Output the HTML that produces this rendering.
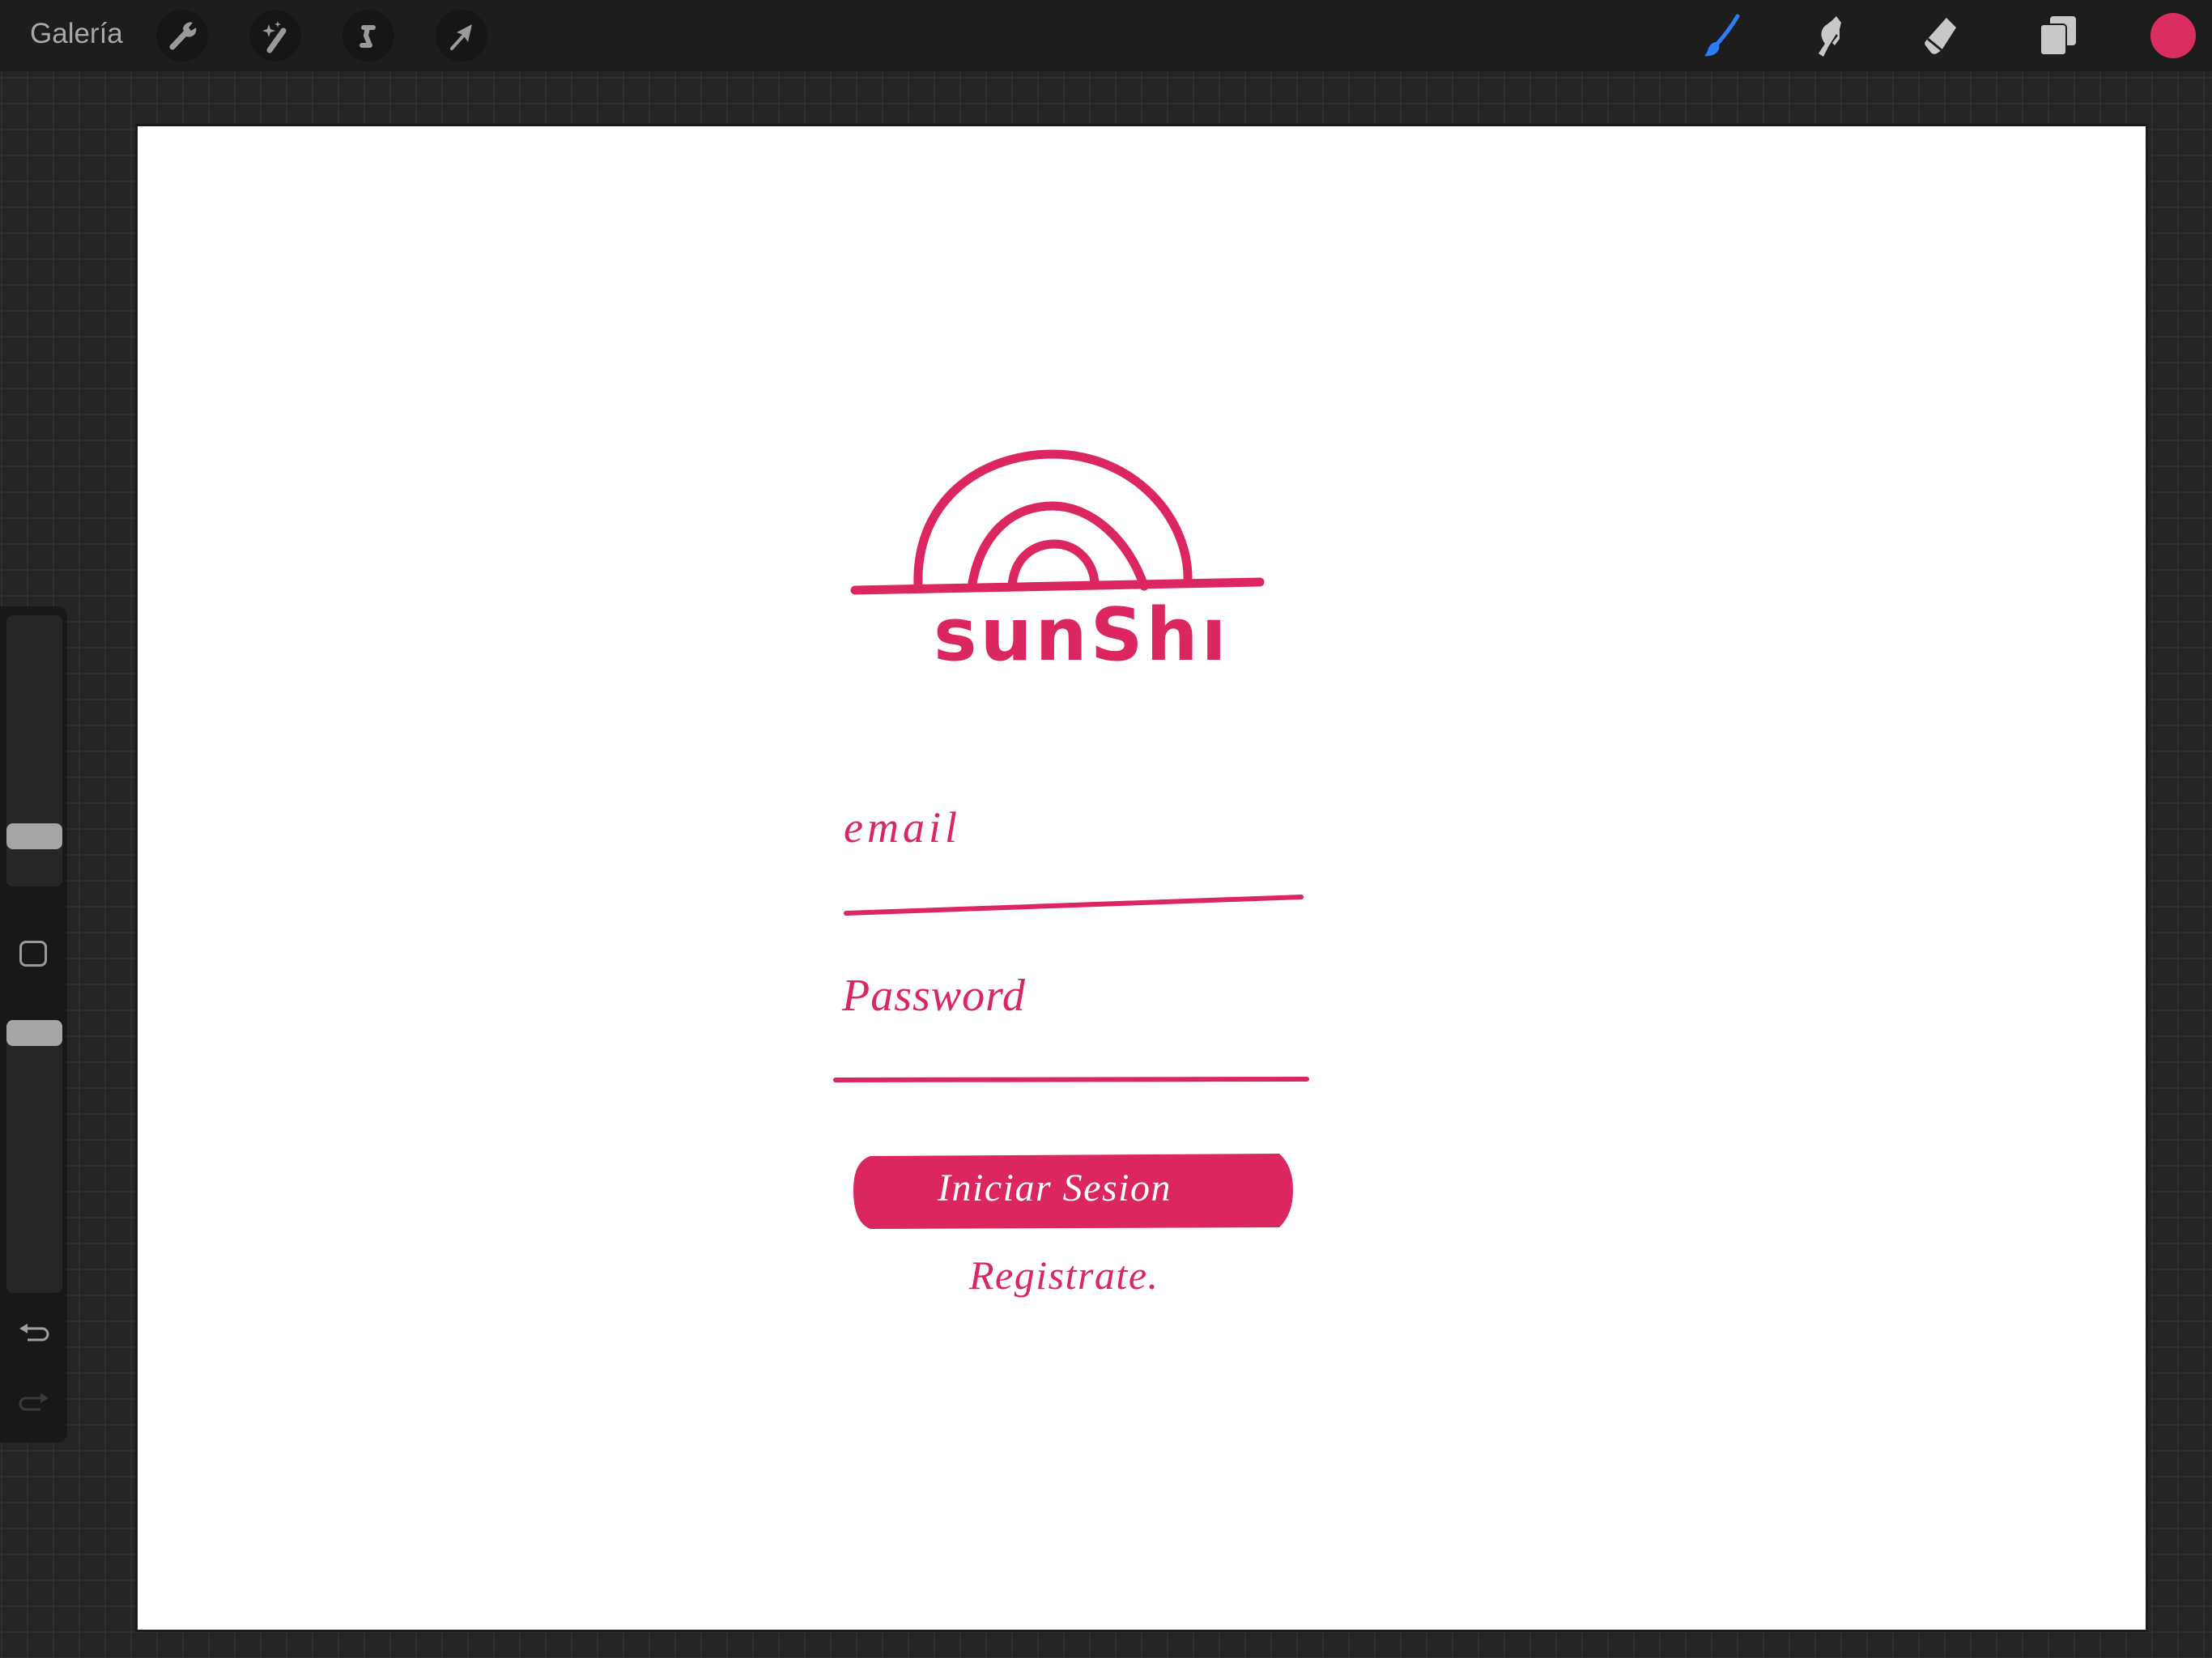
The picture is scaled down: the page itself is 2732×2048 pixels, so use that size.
<!DOCTYPE html>
<html><head><meta charset="utf-8"><style>
html,body{margin:0;padding:0;width:2732px;height:2048px;overflow:hidden;background:#252525;font-family:"Liberation Sans",sans-serif}
.grid{position:absolute;left:0;top:88px;width:2732px;height:1960px;
background-color:#252525;
background-image:linear-gradient(to right,#2f2f2f 2px,transparent 2px),linear-gradient(to bottom,#2f2f2f 2px,transparent 2px);
background-size:32px 32px;background-position:1px 7px}
.top{position:absolute;left:0;top:0;width:2732px;height:88px;background:#1d1d1d}
.gal{position:absolute;left:37px;top:22px;font-size:35px;color:#a8a8a8}
.circ{position:absolute;top:12px;width:64px;height:64px;border-radius:50%;background:#161616}
.circ svg{position:absolute;left:0;top:0}
.canvas{position:absolute;left:170px;top:156px;width:2480px;height:1857px;background:#fff;box-shadow:0 0 0 3px #1a1a1a}
.side{position:absolute;left:0;top:749px;width:83px;height:1033px;background:#181818;border-radius:0 12px 12px 0}
.track{position:absolute;left:8px;width:69px;background:#262626;border-radius:8px}
.thumb{position:absolute;left:8px;width:69px;height:32px;background:#a6a6a6;border-radius:8px}
</style></head><body>
<div class="grid"></div>
<div class="top">
 <div class="gal">Galería</div>
 <div class="circ" style="left:193px"><svg width="64" height="64"><path d="M20 46 L36 29" stroke="#9a9a9a" stroke-width="7" stroke-linecap="round"/><path d="M33 24 a9 9 0 0 1 12 -8 l-5 6 3 4 6 -4 a9 9 0 0 1 -12 11z" fill="#9a9a9a"/></svg></div>
 <div class="circ" style="left:308px"><svg width="64" height="64"><path d="M25 50 L42 26" stroke="#9a9a9a" stroke-width="7" stroke-linecap="round"/><path d="M24 18 l2 6 6 2 -6 2 -2 6 -2 -6 -6 -2 6 -2z M35 14 l1 3 3 1 -3 1 -1 3 -1 -3 -3 -1 3 -1z" fill="#9a9a9a"/></svg></div>
 <div class="circ" style="left:423px"><svg width="64" height="64"><path d="M26 22 h12 M31 22 l-2 10 4 10 M24 44 h10" stroke="#9a9a9a" stroke-width="6" stroke-linecap="round" fill="none"/></svg></div>
 <div class="circ" style="left:538px"><svg width="64" height="64"><path d="M20 48 L38 28" stroke="#9a9a9a" stroke-width="4" stroke-linecap="round"/><path d="M45 18 L40 40 L34 31 L26 28z" fill="#9a9a9a"/></svg></div>
 <svg style="position:absolute;left:2094px;top:14px" width="60" height="60"><path d="M52 6 C46 16 36 30 27 40" stroke="#2f7df6" stroke-width="5" stroke-linecap="round" fill="none"/><path d="M25 38 c5 2 6 7 2 12 c-4 5 -12 6 -16 5 c4 -3 4 -10 8 -14 c2 -2 4 -3 6 -3z" fill="#2f7df6"/></svg>
 <svg style="position:absolute;left:2236px;top:16px" width="56" height="56"><path d="M16 54 L10 50 L18 38 C12 30 12 22 18 16 L26 10 L32 4 L38 12 L36 20 L36 32 L30 40 L27 37 L34 28 L32 26 L22 42z" fill="#c8c8c8"/></svg>
 <svg style="position:absolute;left:2376px;top:20px" width="54" height="50"><path d="M28 2 L40 14 L22 42 L16 46 Q12 48 9 45 L2 36 Q0 33 3 30z" fill="#c8c8c8"/><path d="M5 28 L22 42" stroke="#1d1d1d" stroke-width="3"/></svg>
 <svg style="position:absolute;left:2520px;top:20px" width="48" height="50"><rect x="12" y="0" width="32" height="36" rx="4" fill="#c8c8c8"/><rect x="0" y="10" width="32" height="38" rx="4" fill="#c8c8c8" stroke="#1d1d1d" stroke-width="2"/></svg>
 <div style="position:absolute;left:2656px;top:16px;width:56px;height:56px;border-radius:50%;background:#db2d60"></div>
</div>
<div class="side">
 <div class="track" style="top:11px;height:335px"></div>
 <div class="thumb" style="top:268px"></div>
 <div style="position:absolute;left:24px;top:413px;width:34px;height:32px;border:3px solid #9a9a9a;border-radius:8px;box-sizing:border-box"></div>
 <div class="track" style="top:511px;height:337px"></div>
 <div class="thumb" style="top:511px"></div>
 <svg style="position:absolute;left:22px;top:884px" width="40" height="30"><path d="M10 8 H30 a7 7 0 0 1 0 14 H12" stroke="#a0a0a0" stroke-width="3" fill="none"/><path d="M2 8 L12 2 L12 14z" fill="#a0a0a0"/></svg>
 <svg style="position:absolute;left:22px;top:968px" width="40" height="30"><path d="M30 10 H10 a7 7 0 0 0 0 14 H28" stroke="#3a3a3a" stroke-width="3" fill="none"/><path d="M38 10 L28 4 L28 16z" fill="#3a3a3a"/></svg>
</div>
<div class="canvas"></div>
<svg style="position:absolute;left:0;top:0" width="2732" height="2048">
 <g stroke="#dc2660" stroke-width="11" fill="none" stroke-linecap="round">
  <path d="M1056 729 L1556 719"/>
  <path d="M1134 724 C1130 620 1210 560 1302 561 C1400 562 1470 640 1467 720"/>
  <path d="M1200 726 C1210 660 1250 625 1300 625 C1350 625 1395 670 1413 724"/>
  <path d="M1250 725 C1252 690 1275 672 1303 672 C1330 672 1352 695 1352 723"/>
  <path d="M1045 1128 L1607 1108" stroke-width="6"/>
  <path d="M1032 1334 L1614 1333" stroke-width="6"/>
 </g>
 <text x="1153" y="815" font-family="DejaVu Sans, sans-serif" font-weight="bold" font-size="90" fill="#dc2660" letter-spacing="4">sunShı</text>
 <text x="1042" y="1040" font-family="Liberation Serif, serif" font-style="italic" font-size="54" fill="#dc2660" letter-spacing="5">email</text>
 <text x="1040" y="1248" font-family="Liberation Serif, serif" font-style="italic" font-size="56" fill="#dc2660" letter-spacing="1">Password</text>
 <path d="M1075 1428 L1580 1425 Q1597 1440 1597 1470 Q1597 1500 1580 1516 L1075 1518 Q1054 1510 1054 1470 Q1054 1435 1075 1428z" fill="#dc2660"/>
 <text x="1158" y="1483" font-family="Liberation Serif, serif" font-style="italic" font-size="48" fill="#fff" letter-spacing="1.5">Iniciar Sesion</text>
 <text x="1197" y="1592" font-family="Liberation Serif, serif" font-style="italic" font-size="50" fill="#dc2660" letter-spacing="1.5">Registrate.</text>
</svg>
</body></html>
